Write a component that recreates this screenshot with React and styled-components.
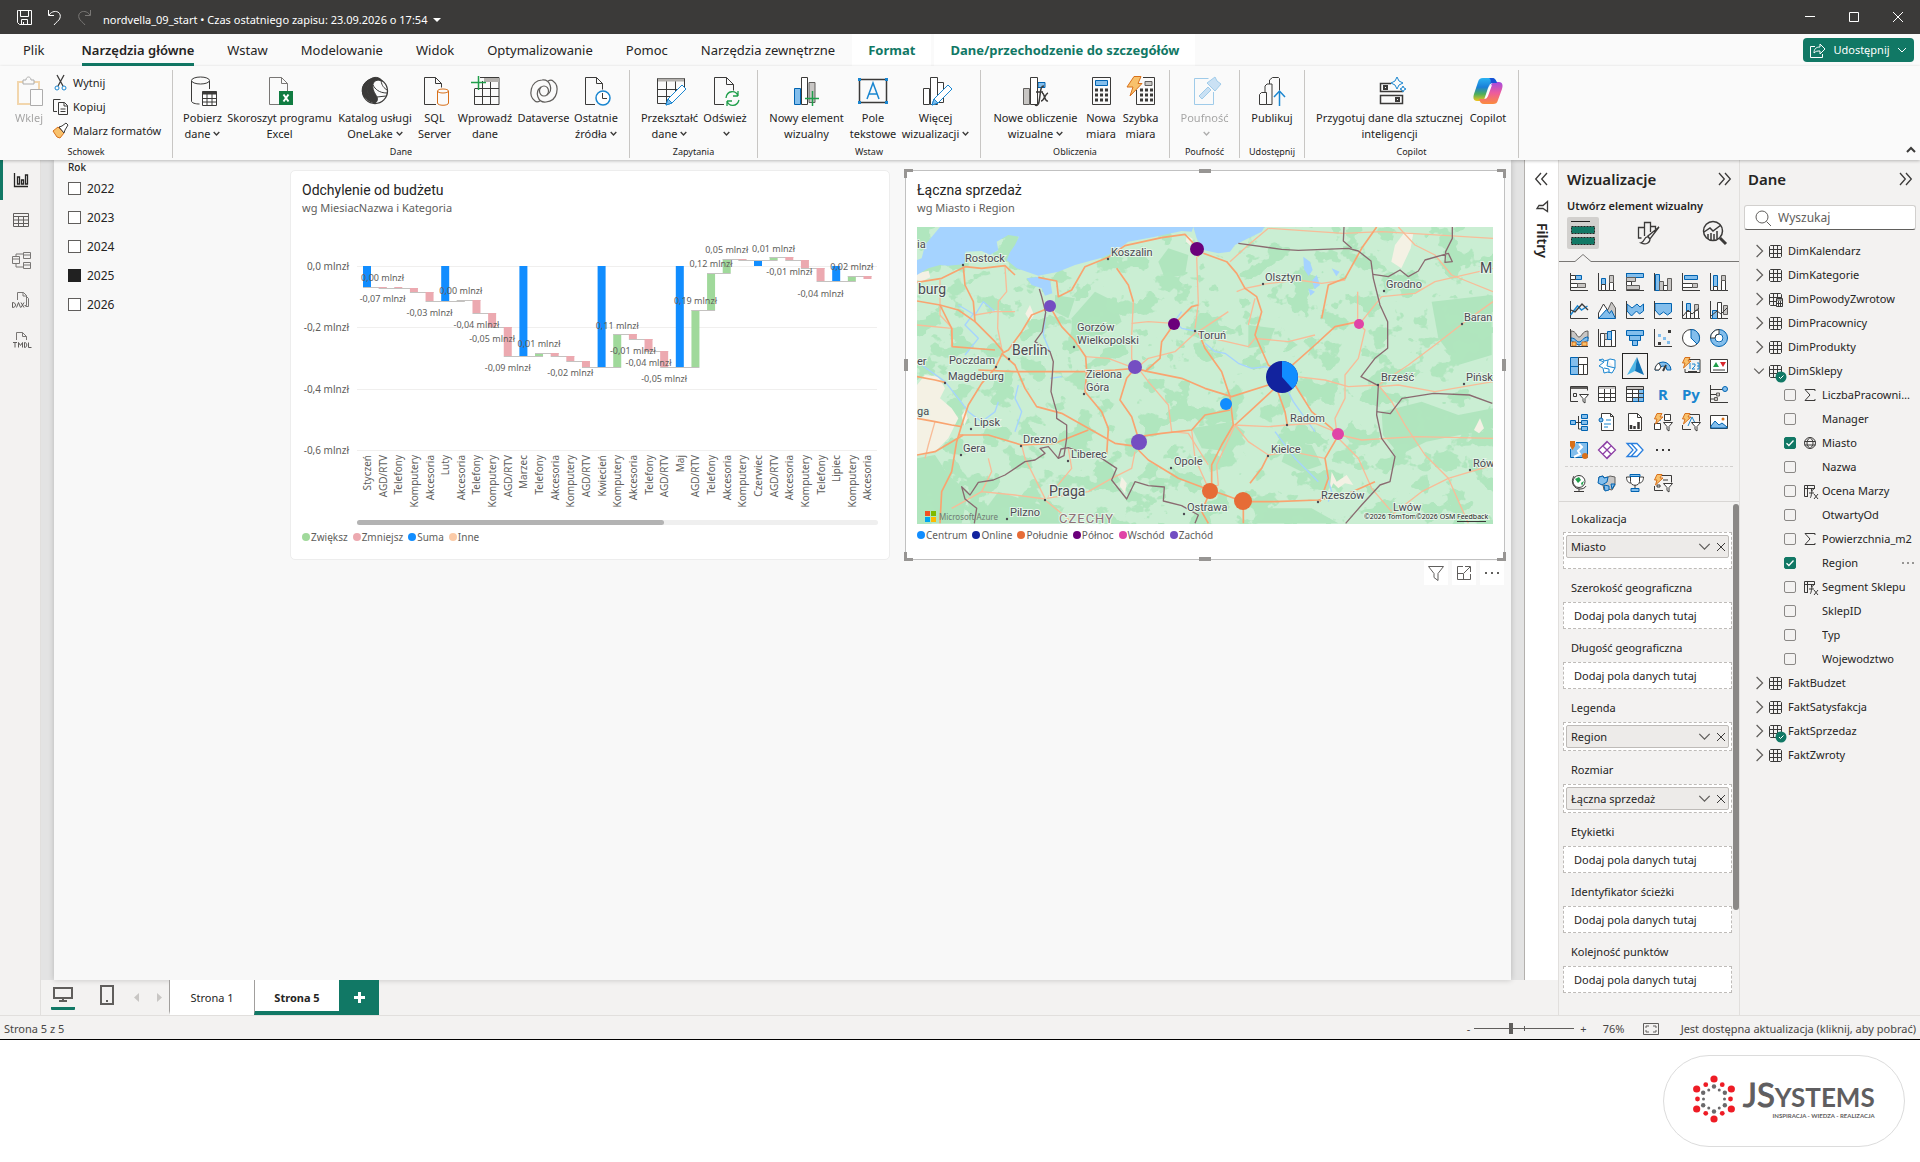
import React, { useState } from 'react'
import styled, { createGlobalStyle } from 'styled-components'

const GlobalStyle = createGlobalStyle`
  * { box-sizing: border-box; }
  body {
    margin: 0;
    background: #fff;
    color: #252423;
    font: 11px/16px "Noto Sans", "Open Sans", sans-serif;
  }
  button, input { font: inherit; color: inherit; }
  button { border: 0; padding: 0; background: none; cursor: pointer; }
  h2, h3, p, ul { margin: 0; padding: 0; }
  ul { list-style: none; }
`

/* ---------- shell ---------- */

const Screen = styled.div`
  min-height: 100vh;
  display: flex;
  flex-direction: column;
`
const AppWindow = styled.div`
  flex: 1;
  display: flex;
  flex-direction: column;
  background: #f3f2f1;
  border-bottom: 1px solid #000;
`
const Workspace = styled.div`
  flex: 1;
  display: flex;
`
const Center = styled.div`
  flex: 1;
  min-width: 0;
  display: flex;
  flex-direction: column;
`
const Svg = styled.svg`
  display: block;
  flex: none;
  overflow: visible;
  fill: none;
  stroke: ${p => p.$color || '#3b3a39'};
  stroke-width: ${p => p.$line || 1};
`

/* ---------- title bar ---------- */

const TitleBar = styled.header`
  height: 34px;
  display: flex;
  align-items: center;
  background: #3b3a39;
  color: #fff;
  padding: 0 0 0 17px;
`
const TitleButton = styled.button`
  width: ${p => p.$w || 30}px;
  height: 34px;
  display: flex;
  align-items: center;
  justify-content: ${p => p.$w ? 'center' : 'flex-start'};
`
const FileName = styled.button`
  display: flex;
  align-items: center;
  gap: 6px;
  margin: 0 auto 0 -4px;
  padding-top: 6px;
  line-height: 16px;
`

/* ---------- ribbon ---------- */

const RibbonTabs = styled.nav`
  height: 32px;
  display: flex;
  align-items: center;
  background: #fafafa;
  padding: 0 6px 0 7px;
`
const RibbonTab = styled.button`
  height: 32px;
  padding: 0 16px;
  margin-right: ${p => p.$first ? 5 : p.$context ? 3 : 1}px;
  font-size: 13px;
  font-weight: ${p => p.$context ? 700 : p.$active ? 600 : 400};
  color: ${p => p.$context ? '#117865' : '#252423'};
  background: ${p => p.$context ? '#fff' : 'none'};
  span {
    display: block;
    padding-top: 2px;
    line-height: 26px;
    border-bottom: 3px solid ${p => p.$active ? '#117865' : 'transparent'};
  }
`
const ShareButton = styled.button`
  margin-left: auto;
  height: 24px;
  width: 111px;
  display: flex;
  align-items: center;
  justify-content: center;
  gap: 7px;
  border-radius: 4px;
  background: #117865;
  color: #fff;
`
const Ribbon = styled.div`
  position: relative;
  z-index: 1;
  height: 94px;
  display: flex;
  align-items: stretch;
  padding: 4px 4px 2px 0;
  background: #fafafa;
  box-shadow: 0 1px 3px rgba(0, 0, 0, 0.25);
`
const RibbonGroup = styled.section`
  display: flex;
  flex-direction: column;
  padding: 0 8px;
  border-right: 1px solid #c8c6c4;
`
const GroupButtons = styled.div`
  height: 78px;
  display: flex;
  justify-content: center;
`
const GroupName = styled.h3`
  font-size: 9px;
  font-weight: 400;
  line-height: 12px;
  text-align: center;
  white-space: nowrap;
`
const RibbonButton = styled.button`
  width: ${p => p.$w}px;
  height: 76px;
  padding-top: 6px;
  display: flex;
  flex-direction: column;
  align-items: center;
  gap: 4px;
  white-space: nowrap;
  opacity: ${p => p.disabled ? 0.4 : 1};
  svg.chev { display: inline-block; margin-left: 3px; vertical-align: 1px; }
`
const ClipButtons = styled.div`
  display: flex;
  flex-direction: column;
  padding: 1px 0 0 2px;
  width: 114px;
`
const ClipButton = styled.button`
  height: 24px;
  display: flex;
  align-items: center;
  gap: 4px;
`
const Collapse = styled.button`
  margin-left: auto;
  align-self: flex-end;
  padding: 0 0 3px;
`

/* ---------- left rail ---------- */

const Rail = styled.nav`
  width: 41px;
  border-right: 1px solid #e1dfdd;
`
const RailButton = styled.button`
  width: 40px;
  height: 40px;
  display: flex;
  align-items: center;
  justify-content: center;
  border-left: 3px solid ${p => p.$active ? '#117865' : 'transparent'};
`

/* ---------- report canvas ---------- */

const CanvasRow = styled.div`
  flex: 1;
  display: flex;
`
const Desk = styled.main`
  flex: 1;
  min-width: 0;
  padding: 0 13px;
  background: #e3e3e3;
  border-right: 1px solid #b3b0ad;
`
const Report = styled.div`
  height: 100%;
  display: grid;
  grid-template-columns: 221px minmax(0, 1fr) minmax(0, 1fr);
  column-gap: 15px;
  align-items: start;
  background: #f8f8f8;
  box-shadow: 0 0 6px rgba(0, 0, 0, 0.2);
  padding-right: 6px;
`
const Slicer = styled.fieldset`
  border: 0;
  margin: 0;
  padding: 0 0 0 14px;
  legend {
    padding: 0;
    font-size: 10px;
    font-weight: 500;
    line-height: 14px;
  }
`
const SlicerItem = styled.label`
  height: 29px;
  display: flex;
  align-items: center;
  gap: 6px;
  font-size: 12px;
  input {
    appearance: none;
    width: 13px;
    height: 13px;
    margin: 0;
    border: 1px solid #605e5c;
    background: #fff;
  }
  input:checked { background: #212121; border-color: #212121; }
`
const Card = styled.section`
  position: relative;
  height: 390px;
  margin-top: 10px;
  padding: 10px 11px;
  background: #fff;
  border: 1px solid ${p => p.$selected ? '#c1c1c1' : '#ededed'};
  border-radius: ${p => p.$selected ? 0 : 5}px;
`
const CardTitle = styled.h2`
  font: 400 14px/18px Roboto, sans-serif;
`
const CardSubtitle = styled.p`
  line-height: 18px;
  color: #605e5c;
`
const ChartScroll = styled.div`
  height: 5px;
  margin: 3px 0 4px 55px;
  border-radius: 3px;
  background: #efefef;
  div {
    width: 59%;
    height: 5px;
    border-radius: 3px;
    background: #b3b3b3;
  }
`
const Legend = styled.ul`
  display: flex;
  gap: 5px;
  font-size: 10px;
  line-height: 16px;
  color: #605e5c;
`
const LegendItem = styled.li`
  display: flex;
  align-items: center;
  gap: 1px;
  &::before {
    content: '';
    width: 8px;
    height: 8px;
    border-radius: 50%;
    background: ${p => p.$color};
  }
`
const MapBox = styled.div`
  margin: 10px 0 3px;
  overflow: hidden;
  svg { display: block; width: 100%; height: auto; }
`
const Handle = styled.i`
  position: absolute;
  ${p => p.$y === 'mid' ? 'top: calc(50% - 6px);' : `${p.$y}: -2px;`}
  ${p => p.$x === 'mid' ? 'left: calc(50% - 6px);' : `${p.$x}: -2px;`}
  width: ${p => p.$y === 'mid' ? 4 : p.$x === 'mid' ? 12 : 9}px;
  height: ${p => p.$x === 'mid' ? 4 : p.$y === 'mid' ? 12 : 9}px;
  ${p => p.$x === 'mid' || p.$y === 'mid'
    ? 'background: #979593;'
    : `border-${p.$x}: 3px solid #979593; border-${p.$y}: 3px solid #979593;`}
`
const VisualTools = styled.div`
  position: absolute;
  top: 100%;
  right: 0;
  margin-top: 2px;
  display: flex;
  gap: 4px;
  button {
    width: 24px;
    height: 24px;
    display: flex;
    align-items: center;
    justify-content: center;
    background: #fff;
  }
`

/* ---------- page tabs and status ---------- */

const PageTabs = styled.nav`
  height: 35px;
  display: flex;
`
const LayoutButton = styled.button`
  width: 44px;
  display: flex;
  justify-content: center;
  padding-top: 5px;
  span {
    display: block;
    height: 25px;
    width: 24px;
    border-bottom: 3px solid ${p => p.$active ? '#117865' : 'transparent'};
    border-radius: 1px;
  }
`
const Arrows = styled.div`
  width: 40px;
  display: flex;
  align-items: center;
  justify-content: space-between;
  padding: 0 7px 0 0;
`
const PageTab = styled.button`
  width: 85px;
  border-left: 1px solid #a19f9d;
  border-bottom: 4px solid ${p => p.$active ? '#117865' : '#fff'};
  background: #fff;
  font-weight: ${p => p.$active ? 700 : 400};
  padding-top: 5px;
`
const AddPage = styled.button`
  width: 40px;
  background: #117865;
  display: flex;
  align-items: center;
  justify-content: center;
`
const StatusBar = styled.footer`
  height: 24px;
  display: flex;
  align-items: center;
  border-top: 1px solid #e1dfdd;
  padding: 2px 4px 0 4px;
  color: #484644;
`
const ZoomArea = styled.div`
  margin-left: auto;
  display: flex;
  align-items: center;
  input {
    appearance: none;
    width: 100px;
    height: 12px;
    margin: 0 6px 0 4px;
    background:
      linear-gradient(#605e5c, #605e5c) 0 50% / 100% 1px no-repeat,
      linear-gradient(#605e5c, #605e5c) 50% 50% / 1px 5px no-repeat;
  }
  input::-webkit-slider-thumb {
    appearance: none;
    width: 4px;
    height: 11px;
    background: #605e5c;
  }
  output { width: 23px; margin: 0 17px 0 16px; }
`
const UpdateLink = styled.a`
  margin-left: 22px;
  color: #484644;
  text-decoration: none;
`

/* ---------- side panes ---------- */

const FilterPane = styled.aside`
  width: 33px;
  background: #fff;
  display: flex;
  flex-direction: column;
  align-items: center;
  padding-top: 13px;
  gap: 16px;
`
const FilterTitle = styled.h2`
  writing-mode: vertical-rl;
  font-size: 14px;
  line-height: 18px;
  font-weight: 600;
  margin-top: -6px;
`
const Pane = styled.aside`
  width: 181px;
  border-left: 1px solid #e1dfdd;
  display: flex;
  flex-direction: column;
`
const PaneHead = styled.header`
  height: 37px;
  display: flex;
  align-items: center;
  justify-content: space-between;
  padding: 0 8px;
  h2 {
    font-size: 15px;
    line-height: 20px;
    font-weight: 600;
  }
`
const BuildTitle = styled.h3`
  padding: 0 8px;
  font-size: 11px;
  line-height: 18px;
  font-weight: 600;
`
const BuildTabs = styled.div`
  display: flex;
  justify-content: space-between;
  padding: 2px 8px 0;
  height: 39px;
  button {
    width: 32px;
    height: 32px;
    display: flex;
    align-items: center;
    justify-content: center;
    border-radius: 2px;
  }
  button:first-child { background: #d2d0ce; }
`
const VisualGrid = styled.div`
  display: grid;
  grid-template-columns: repeat(6, 28px);
  grid-auto-rows: 28px;
  padding: ${p => p.$pinned ? '2px 6px 4px' : '6px 6px 2px'};
`
const VisualButton = styled.button`
  width: 24px;
  height: 24px;
  margin: 2px;
  display: flex;
  align-items: center;
  justify-content: center;
  outline: ${p => p.$on ? '1px solid #252423' : 'none'};
  color: #1a86d0;
  font-size: 15px;
  font-weight: 700;
`
const Dashes = styled.div`
  margin: 0 6px;
  border-top: 1px dashed #d2d0ce;
`
const Wells = styled.div`
  flex: 1;
  display: flex;
  justify-content: space-between;
  border-top: 1px solid #d8d6d4;
`
const WellList = styled.div`
  flex: 1;
  padding-left: 4px;
`
const WellName = styled.h3`
  height: ${p => p.$first ? 30 : 33}px;
  padding: ${p => p.$first ? 9 : 11}px 8px 0;
  font-size: 11px;
  line-height: 16px;
  font-weight: 400;
`
const WellBox = styled.div`
  height: ${p => p.$tall ? 37 : p.$filled ? 29 : 27}px;
  padding: ${p => p.$filled ? '2px' : '0 10px'};
  border: 1px dashed #bebbb8;
  background: #fff;
  line-height: 26px;
`
const Chip = styled.div`
  height: 23px;
  display: flex;
  align-items: center;
  gap: 6px;
  padding: 0 3px 0 4px;
  border: 1px solid #bebbb8;
  border-radius: 2px;
  background: #edebe9;
  span { margin-right: auto; }
`
const Thumb = styled.div`
  width: 6px;
  height: 406px;
  margin: 2px 0 0 1px;
  border-radius: 3px;
  background: #8a8886;
`
const Search = styled.label`
  height: 25px;
  margin: 8px 4px 9px 4px;
  padding: 0 10px;
  display: flex;
  align-items: center;
  gap: 7px;
  border: 1px solid #d2d0ce;
  border-bottom-color: #605e5c;
  border-radius: 3px;
  background: #fff;
  input {
    width: 100%;
    min-width: 0;
    padding: 0;
    border: 0;
    outline: 0;
    font-size: 12px;
    background: none;
  }
  input::placeholder { color: #605e5c; opacity: 1; }
`
const TableRow = styled.button`
  width: 100%;
  height: 24px;
  display: flex;
  align-items: center;
  padding-left: 13px;
  > svg.chev { margin-right: 4px; }
  span { margin-left: 6px; }
`
const FieldRow = styled.label`
  height: 24px;
  display: flex;
  align-items: center;
  padding: 0 6px 0 44px;
  input {
    appearance: none;
    flex: none;
    width: 12px;
    height: 12px;
    margin: 0 8px 0 0;
    border: 1px solid #8a8886;
    border-radius: 2px;
    background: #f3f2f1;
  }
  input:checked {
    border-color: #117865;
    background: #117865 url("data:image/svg+xml,%3Csvg xmlns='http://www.w3.org/2000/svg' viewBox='0 0 10 10'%3E%3Cpath d='M1.5 5.2l2.4 2.3 4.6-5' fill='none' stroke='%23fff' stroke-width='1.3'/%3E%3C/svg%3E") center no-repeat;
  }
  .kind { flex: none; width: 18px; }
  .name {
    flex: 1;
    overflow: hidden;
    white-space: nowrap;
    text-overflow: ellipsis;
  }
`

/* ---------- badge under the window ---------- */

const BadgeStrip = styled.footer`
  display: flex;
  justify-content: flex-end;
  padding: 15px;
  background: #fff;
`
const Badge = styled.a`
  width: 242px;
  height: 92px;
  display: flex;
  align-items: center;
  gap: 7px;
  padding: 0 0 4px 28px;
  border: 1px solid #dcdcdc;
  border-radius: 46px;
  color: #5f5e60;
  font-family: Lato, sans-serif;
  text-decoration: none;
`
const Wordmark = styled.div`
  display: flex;
  flex-direction: column;
  align-items: flex-end;
  strong { font-size: 26px; line-height: 30px; font-weight: 700; }
  big { font-size: 33px; font-weight: 400; -webkit-text-stroke: 1px #5f5e60; }
  small { font-size: 6px; line-height: 8px; font-weight: 700; }
`

/* ---------- icons ---------- */

const bl = { fill: '#83beec', stroke: '#0063b1' }
const gr = { fill: '#c8c6c4', stroke: '#605e5c' }
const wh = { fill: '#fff' }
const or = { fill: '#f8c16c', stroke: '#d8701a' }
const teal = { stroke: '#1a86d0' }
const Axis = () => <path d="M.5 0v17.5H18" />
const Bolt = () => <path d="M3 .5h5L6 4h3L1.500 11 3 6H.5z" {...or} />
const Funnel = () => <path d="M9.500 9.500h9l-3.500 4v4.500l-2-1.500v-3z" {...wh} />

const Chevron = ({ size = 10, dir = 'down', color, line }) => {
  const d = { down: 'M1 3l4 4 4-4', up: 'M1 7l4-4 4 4', right: 'M3 0l5 5-5 5' }[dir]
  return <Svg className="chev" width={size} height={size} viewBox="0 0 10 10" $color={color} $line={line}><path d={d} /></Svg>
}
const Double = ({ left }) => (
  <Svg width="13" height="12" viewBox="0 0 13 12" $line={1.3}>
    <path d={left ? 'M6 0L.7 6 6 12M12 0L6.700 6 12 12' : 'M1 0l5.300 6L1 12M7 0l5.300 6L7 12'} />
  </Svg>
)

const bigIcons = {
  paste: <><path d="M9 6H4v22h12M20 6h5v7" stroke="#e8a33d" strokeWidth="2" /><path d="M9 8V4h3c0-4 5-4 5 0h3v4z" /><path d="M16.500 13.500h12v16h-12z" {...wh} /></>,
  database: <><path d="M3.500 5v20c0 2 4 3 8 3M21.500 5v8" /><ellipse cx="12.500" cy="4.500" rx="9" ry="3.500" /><path d="M14.500 15.500h14v14h-14z" {...wh} /><path d="M14.500 17h14" strokeWidth="3" /><path d="M14.500 22.500h14M14.500 26h14M19 18v11M24 18v11" /></>,
  excel: <><path d="M14 28.500H4.500v-27h12l6 6v8M16.500 1.500v6h6" stroke="#797775" /><path d="M14 15h14v14H14z" fill="#107c41" stroke="none" /><path d="M18.500 18.500l5 7M23.500 18.500l-5 7" stroke="#fff" strokeWidth="2" /></>,
  lake: <><circle cx="15" cy="15" r="12.500" strokeWidth="1.300" /><path d="M10 3.500C14 0 20 1 22 5c-5-2-8 0-9 3-1 6 2 9 4 13 1 3 0 5-2 6-2-1-4-3-5-5C7 17 7 10 10 3.500z" fill="#3b3a39" /><path d="M10 3.500C3 6 0 14 4 20c3 4 6 6 11 7-7-5-10-13-5-23.500z" fill="#3b3a39" /><path d="M13 9c2 4 6 8 14 8M17 21l9-1M21 5c1 5 3 7 6 9" /></>,
  sql: <><path d="M16 28.500H4.500v-27h11l6 6v4M15.500 1.500v6h6" /><path d="M17.500 15v12c0 3 11 3 11 0V15" fill="#fafafa" stroke="#d8701a" /><ellipse cx="23" cy="15" rx="5.500" ry="2" stroke="#d8701a" /></>,
  enter: <><path d="M10 1.500h19v27H4.500V13M4.500 20.500h24.500M4.500 12.500h24.500M12.500 5v23.500M20.500 5v23.500" /><path d="M14 4h15" stroke="#b3b0ad" strokeWidth="4" /><path d="M8.500 0v14M1 6.500h15" stroke="#1f9e4a" strokeWidth="1.500" /></>,
  dataverse: <g stroke="#605e5c" strokeWidth="1.200"><ellipse cx="15" cy="15" rx="4.500" ry="5" /><path d="M24 5c7 5 5 20-7 21-8 1-12-10-5-15M6 25C-1 20 1 5 13 4c8-1 12 10 5 15M19 5c2-1 4-1 5 0M11 25c-2 1-4 1-5 0" /></g>,
  recent: <><path d="M14 28.500H4.500v-27h11l6 6v6M15.500 1.500v6h6" /><circle cx="22" cy="22" r="7" fill="#fff" stroke="#1a86d0" strokeWidth="1.500" /><path d="M21.500 17v5.500H26" /></>,
  transform: <><path d="M2.500 2.500h27v9M2.500 2.500v25H14M2.500 13.500h25M2.500 20.500h16M11.500 5v22M20.500 5v14" /><path d="M3 4h26" stroke="#b3b0ad" strokeWidth="3" /><path d="M11 29l2-6 14-14 4 4-14 14z" fill="#fff" stroke="#1a86d0" /><path d="M11 29l2-6 4 4z" fill="#83beec" stroke="#1a86d0" /></>,
  refresh: <><path d="M14 28.500H4.500v-27h12l7 7v6M16.500 1.500v7h7" /><path d="M16 22c1-8 10-8 12-2v-5M29 24c-2 7-10 7-12 1v5M28 20h-5M17 25h5" stroke="#1f9e4a" strokeWidth="1.300" /></>,
  newVisual: <><path d="M2.500 12.500h6v16h-6z" {...bl} /><path d="M17 6.500h6v20h-6z" {...gr} /><path d="M9.500 1.500h6v27h-6z" {...wh} /><path d="M20.500 15v15M13 22.500h14" stroke="#1f9e4a" strokeWidth="1.500" /></>,
  textBox: <><path d="M1.500 3.500h27v23h-27z" strokeWidth="1.500" /><path d="M9 23l6-16 6 16M11 18h8" stroke="#1a86d0" strokeWidth="1.500" /><path d="M0 2h3v3H0zM27 2h3v3h-3zM0 25h3v3H0zM27 25h3v3h-3z" fill="#1a86d0" stroke="none" /></>,
  moreVisuals: <><path d="M2.500 12.500h6v16h-6zM9.500 1.500h7v27h-7zM16.500 6.500h6v20h-6z" {...wh} /><path d="M11 29l2-6 14-14 4 4-14 14z" fill="#fff" stroke="#1a86d0" /><path d="M11 29l2-6 4 4z" fill="#83beec" stroke="#1a86d0" /></>,
  visualCalc: <><path d="M2.500 12.500h6v16h-6z" {...gr} /><path d="M17 6.500h7v5h-7z" {...bl} /><path d="M9.500 1.500h7v27h-7z" {...wh} /><path d="M23 10c-4 0-3 5-5 16-.5 3-2 4-4 3M15 16h7M21 17c3 0 2 9 6 8M27 17c-3 1-4 8-7 8" strokeWidth="1.500" /></>,
  measure: <><path d="M6.500 1.500h18v27h-18z" /><path d="M9.500 4.500h12v5h-12z" {...bl} /><path d="M9 14h13M9 19h13M9 24h13" strokeWidth="3" strokeDasharray="3 2" /></>,
  quickMeasure: <><path d="M17 1.500h11.500v27h-18V14" /><path d="M19 5.500h7v4h-7z" {...gr} /><path d="M14 14h13M14 19h13M14 24h13" strokeWidth="3" strokeDasharray="3 2" /><path d="M8 .5h7l-3 7h4L4 20l3-9H1z" {...or} /></>,
  sensitivity: <><path d="M4.500 2.500h14M4.500 2.500v26h19V16" {...teal} /><path d="M9 20l9-9 3 3-9 9zM17 7l8-6 2 4 4 3-6 7z" fill="#83beec" stroke="#1a86d0" /></>,
  publish: <><path d="M2.500 28.500v-10l2-2h5v12zM8 16v-6l2-2h5v20.500H9.500M12.500 8V4l3-2.500h6l1 1v12" /><path d="M22.500 30V16M17 21l5.500-6 5.500 6" stroke="#1a86d0" strokeWidth="1.500" /></>,
  prepare: <><path d="M16 7.500H5.500v8h22V13M5.500 19.500h22v8h-22z" strokeWidth="1.500" /><path d="M9 10h3v3H9zM21 22h3v3h-3z" strokeWidth="2" /><path d="M22 1l2 4 4 2-4 2-2 4-2-4-4-2 4-2zM28 10l1 2 2 1-2 1-1 2-1-2-2-1 2-1z" fill="#fafafa" stroke="#1a86d0" /></>,
  copilot: <g stroke="none"><path d="M10 2h9c3 0 4 2 5 5h-4c-3 0-4 2-5 5l-3 9c-1 3-2 4-5 4H4c-4 0-4-4-3-7l4-12c1-3 2-4 5-4z" fill="url(#copA)" /><path d="M20 28h-9c-3 0-4-2-5-5h4c3 0 4-2 5-5l3-9c1-2 2-3 5-3h3c4 0 4 4 3 7l-4 11c-1 3-2 4-5 4z" fill="url(#copB)" /><path d="M15 12c1-3 2-5 5-5h4c-1-3-2-5-5-5h-3c3 2 2 5-1 10z" fill="#1750d6" /><path d="M13 21l3-9c1-2 2-3 3-3l-4 11c-1 2-2 3-3 3z" fill="#fff" /></g>,
}
const BigIcon = ({ name }) => (
  <Svg width="30" height="30" viewBox="0 0 30 30">
    {name === 'copilot' && (
      <defs>
        <linearGradient id="copA" x1="0" y1="0" x2="0" y2="1"><stop offset="0" stopColor="#2ab3f2" /><stop offset=".4" stopColor="#1a7fd8" /><stop offset=".7" stopColor="#4fae5a" /><stop offset="1" stopColor="#f0c51d" /></linearGradient>
        <linearGradient id="copB" x1="0" y1="0" x2="0" y2="1"><stop offset="0" stopColor="#a34be0" /><stop offset=".5" stopColor="#ee5b9c" /><stop offset="1" stopColor="#fb8b3c" /></linearGradient>
      </defs>
    )}
    {bigIcons[name]}
  </Svg>
)

const smallTable = <><path d="M.5 3V1.500l1-1h10l1 1v10l-1 1h-10l-1-1zM.5 4.500h12M.5 8.500h12M4.500.5v12M8.500.5v12" /></>

// gallery tiles, in reading order
const gallery = [
  ['Skumulowany słupkowy', <><Axis /><path d="M5.500 2.500h6v4h-6z" {...bl} /><path d="M.5 2.500h5v4h-5zM.5 10.500h7v4h-7z" {...wh} /><path d="M7.500 10.500h8v4h-8z" {...gr} /></>],
  ['Skumulowany kolumnowy', <><Axis /><path d="M3.500 5.500h4v6h-4z" {...bl} /><path d="M3.500 11.500h4v6h-4zM11.500 9.500h4v8h-4z" {...wh} /><path d="M11.500 2.500h4v7h-4z" {...gr} /></>],
  ['Grupowany słupkowy', <><Axis /><path d="M.5 .5h17v4H.5z" {...bl} /><path d="M.5 4.500h9v4h-9z" {...gr} /><path d="M.5 8.500h5v4h-5z" {...wh} /><path d="M.5 12.500h13v4H.5z" {...gr} /></>],
  ['Grupowany kolumnowy', <><Axis /><path d="M1.500 1.500h4v16h-4z" {...bl} /><path d="M5.500 8.500h4v9h-4z" {...gr} /><path d="M9.500 12.500h4v5h-4z" {...wh} /><path d="M13.500 5.500h4v12h-4z" {...gr} /></>],
  ['Skumulowany słupkowy 100%', <><Axis /><path d="M2.500 2.500h13v4h-13z" {...bl} /><path d="M.5 10.500h10v4H.5z" {...wh} /><path d="M10.500 10.500h5v4h-5z" {...gr} /></>],
  ['Skumulowany kolumnowy 100%', <><Axis /><path d="M3.500 2.500h4v11h-4z" {...bl} /><path d="M3.500 13.500h4v4h-4zM11.500 7.500h4v10h-4z" {...wh} /><path d="M11.500 2.500h4v5h-4z" {...gr} /></>],

  ['Liniowy', <><Axis /><path d="M.5 14l7-9 4 4 6-4" {...teal} strokeWidth="1.500" /><path d="M1 9l4 2 7-8 6 6" strokeWidth="1.300" /></>],
  ['Warstwowy', <><path d="M6 17L13.500 1l4 6v10z" {...gr} /><path d="M.5 12l5-9 4 6-5 8h-4z" {...wh} /><path d="M.5 17.500l8-9 3 4 2-3 4 8z" {...bl} /></>],
  ['Skumulowany warstwowy', <><path d="M1 3l5 4 5-4 3 3 3.500-3v7l-4 3-3-3-5 5L1 10z" {...bl} /><Axis /></>],
  ['Warstwowy 100%', <><path d="M1 2.500h16.500V11l-4 3-4-3-4 3L1 9z" {...bl} /><Axis /></>],
  ['Liniowy i skumulowany', <><Axis /><path d="M4.500 2.500h4v8h-4z" {...bl} /><path d="M4.500 10.500h4v7h-4zM12.500 9.500h4v8h-4z" {...wh} /><path d="M12.500 3.500h4v6h-4z" {...gr} /><path d="M1 15l5-6 4 4 7-6" /></>],
  ['Liniowy i grupowany', <><Axis /><path d="M2.500 9.500h5v8h-5z" {...bl} /><path d="M7.500 1.500h4v16h-4z" {...wh} /><path d="M13.500 4.500h4v9h-4z" {...gr} /><path d="M1 15l6-5 4 3 6-6" /></>],

  ['Wstążkowy', <><path d="M1 2c6 0 5 6 8 6s3-6 9-6v8c-5 0-6 6-9 6s-4-6-8-6z" {...gr} /><path d="M1 9c5 0 5 4 8 4s4-5 9-5v4c-5 0-6 4-9 4s-4-4-8-4z" {...bl} /><path d="M2 13h4v4H2zM12 13h5v4h-5z" {...or} /><Axis /></>],
  ['Kaskadowy', <><Axis /><path d="M2.500 4.500h4v13h-4zM13.500 1.500h4v16h-4z" {...wh} /><path d="M6.500 4.500h3v6h-3z" {...gr} /><path d="M9.500 2.500h4v8h-4z" {...bl} /></>],
  ['Lejek', <><path d="M.5 1.500h17v5H.5zM3.500 6.500h11v5h-11zM6.500 11.500h5v5h-5z" {...bl} /></>],
  ['Punktowy', <><Axis /><path d="M14 1h3v3h-3zM4 13h3v3H4z" fill="#3b3a39" stroke="none" /><path d="M4 5h3v3H4zM9 8h3v3H9zM13 12h3v3h-3z" fill="#83beec" stroke="none" /></>],
  ['Kołowy', <><circle cx="9" cy="9" r="8.500" {...wh} /><path d="M9 .5v8.500l6 6A8.500 8.500 0 0 0 9 .5z" {...bl} /></>],
  ['Pierścieniowy', <><circle cx="9" cy="9" r="6.500" stroke="#83beec" strokeWidth="4" /><circle cx="9" cy="9" r="8.500" stroke="#0063b1" /><circle cx="9" cy="9" r="4" {...wh} stroke="#0063b1" /><path d="M.5 9A8.500 8.500 0 0 1 9 .5V5a4 4 0 0 0-4 4z" {...wh} /></>],

  ['Mapa drzewa', <><path d="M.5 .5h8v17h-8z" {...bl} /><path d="M8.500 .5h9v7h-9zM8.500 7.500h5v10h-5zM13.500 7.500h4v10h-4z" {...wh} /><path d="M.5 9.500h8" stroke="#0063b1" /></>],
  ['Mapa', <path d="M1 3l4-1 1 2 4-1 2-1 5 1v8l-3 5-4-1-4 1-1-5-4-2 5-4zM10 3l-1 6 8 2M6 11l5 1v4" stroke="#1a86d0" fill="#fff" />],
  ['Azure Maps', <><path d="M11 0L1 18l8-4z" fill="#4fb8e8" stroke="none" /><path d="M11 0L9 14l9 4z" fill="#1272b4" stroke="none" /></>, true],
  ['Miernik', <><path d="M1 13a8 8 0 0 1 16 0h-4a4 4 0 0 0-8 0z" {...bl} /><path d="M1 13a8 8 0 0 1 4-7l2 4-2 3z" {...wh} /><path d="M9 14l3-6" strokeWidth="2" /></>],
  ['Karta', <><path d="M7 2.500h11v13H3V12M6 14.500h9" /><path d="M8 6v6M10 7h3v2l-3 3h3M15 6h2v6h-2M15 9h2" {...teal} /><Bolt /></>],
  ['Wskaźnik KPI', <><path d="M.5 2.500h17v13H.5zM3 13h12" {...wh} /><path d="M3 10l3-5 3 5z" fill="#1f9e4a" stroke="none" /><path d="M10 5h6l-3 5z" fill="#d8262c" stroke="none" /></>],

  ['Fragmentator', <><path d="M.5 1.500h17v4M.5 1.500v15H8" /><path d="M1 3h16" {...gr} strokeWidth="2" /><path d="M3.500 8.500h3v3h-3z" /><Funnel /></>],
  ['Tabela', <><path d="M.5 1.500h17v15H.5zM.5 8.500h17M.5 12.500h17M6.500 4v13M12.500 4v13" {...wh} /><path d="M1 3h16" stroke="#c8c6c4" strokeWidth="2" /></>],
  ['Macierz', <><path d="M.5 1.500h17v15H.5z" {...wh} /><path d="M6.500 12.500h11v4h-11zM12.500 8.500h5v4h-5z" {...bl} /><path d="M12.500 4.500h5v4h-5z" {...bl} /><path d="M.5 4.500h17M.5 8.500h17M.5 12.500h17M6.500 4v13M12.500 4v13" /><path d="M1 3h16" stroke="#c8c6c4" strokeWidth="2" /></>],
  ['R', 'R'],
  ['Python', 'Py'],
  ['Kluczowe elementy', <><path d="M.5 0v17.500H18M.5 4.500h12M.5 9.500h6M.5 14h4" /><circle cx="15" cy="4" r="2.500" {...bl} /><path d="M6.500 8h3v3h-3zM4.500 12.500h3v3h-3z" {...gr} /></>],

  ['Drzewo dekompozycji', <><path d="M6 9.500h5M8.500 3v13H11" /><path d="M.5 7.500h5v4h-5zM11.500 1.500h6v4h-6zM11.500 7.500h6v4h-6zM11.500 13.500h6v4h-6z" {...bl} /></>],
  ['Narracja', <><path d="M3.500 5V.5h9l3 3v14h-12V10M12.500 .5v3h3" {...wh} /><circle cx="3" cy="7" r="2" {...bl} /><path d="M8 7h5M6 11h7M6 14h4" {...teal} /></>],
  ['Raport podzielony', <><path d="M2.500 .5h9l4 4v13h-13z" {...wh} /><path d="M11.500 .5v4h4" /><path d="M5 16v-4M8.500 16v-3M12.500 16V9" strokeWidth="2.500" /></>],
  ['Fragmentator kafelkowy', <><path d="M10.500 1.500h6v6h-6z" {...wh} /><path d="M.5 10.500h6v6h-6z" {...wh} /><path d="M3 5h3v3" {...bl} /><Bolt /><Funnel /></>],
  ['Fragmentator tekstu', <><path d="M8 1.500h9.500v7M.5 12v4.500H9" /><path d="M6 13l4-9 3 6" {...teal} /><Bolt /><Funnel /></>],
  ['Obraz', <><path d="M.5 2.500h17v13H.5z" {...wh} /><path d="M1 13l4-5 4 4 3-2 5 4v1H1z" {...bl} /><circle cx="13" cy="6" r="1.500" fill="#d8701a" stroke="none" /></>],

  ['ArcGIS', <><path d="M6 1.500h11.500v15H.5V8" fill="#83beec" stroke="#0063b1" /><path d="M9 3l3 3-4 4 2 3-6 3" stroke="#fff" strokeWidth="2" /><path d="M0 0h5v5L2.500 9 0 5z" fill="#d8701a" stroke="none" /><circle cx="15" cy="15" r="3" fill="#d8701a" stroke="none" /></>],
  ['Power Apps', <path d="M9 .5L17.500 9 9 17.500.5 9zM9 9L5 5M9 9l4-4M9 9l-4 4M9 9l4 4M5 5l4-4M13 13l-4 4" stroke="#8d3fa5" fill="#fff" strokeWidth="1.300" />],
  ['Power Automate', <path d="M1 2.500h10l6 6.500-6 6.500H1L7 9zM5 2.500L11 9l-6 6.500" stroke="#2a7fde" fill="#fff" strokeWidth="1.300" />],
  ['Więcej', <path d="M2 9h2M8 9h2M14 9h2" strokeWidth="2" />],
]
const pinned = [
  ['Globus', <><circle cx="9" cy="7.500" r="6" {...wh} /><path d="M5 5l4-2 2 3-3 3zM11 9l3-2-2 5z" fill="#1f9e4a" stroke="none" /><path d="M4 2c-4 6 0 13 6 13 3 0 5-1 6-3M9 15v2.500M4 17.500h10" /></>],
  ['Kartogram', <><path d="M1 3l4-1 1 2 4-1 2-1 5 1v8l-3 5-4-1-4 1-1-5-4-2z" {...gr} /><path d="M1 3l4-1 1 2 4-1-1 5-5 3-4-2zM6 11l5 1v4l-4 1zM13 10h4l-3 5z" {...bl} /></>],
  ['Trofeum', <><path d="M4.500 .5h9v7c0 5-9 5-9 0zM4.500 3h-4c0 4 2 6 4 6M13.500 3h4c0 4-2 6-4 6M9 11v3" {...wh} /><path d="M4 .5h10v2H4zM5 14.500h8v3H5z" {...bl} /></>],
  ['Fragmentator listy', <><path d="M8 1.500h9.500v7M.5 12v4.500H9M9 6h5M3 11h3v2H3z" /><Bolt /><Funnel /></>],
]

/* ---------- waterfall ---------- */

// [category, kind, top, bottom] in chart units down from zero
const bars = [
  ['Styczeń', 'sum', 0, 21], ['AGD/RTV', 'dec', 21, 22], ['Telefony', 'dec', 21, 22], ['Komputery', 'dec', 22, 26], ['Akcesoria', 'dec', 26, 35],
  ['Luty', 'sum', 0, 35], ['Akcesoria', 'inc', 34, 35], ['Telefony', 'dec', 34, 47], ['Komputery', 'dec', 47, 61], ['AGD/RTV', 'dec', 61, 90],
  ['Marzec', 'sum', 0, 90], ['Telefony', 'inc', 87, 90], ['Akcesoria', 'dec', 87, 90], ['Komputery', 'dec', 90, 95], ['AGD/RTV', 'dec', 95, 101],
  ['Kwiecień', 'sum', 0, 101], ['Komputery', 'inc', 68, 101], ['Akcesoria', 'dec', 68, 73], ['Telefony', 'dec', 73, 85], ['AGD/RTV', 'dec', 85, 101],
  ['Maj', 'sum', 0, 101], ['AGD/RTV', 'inc', 44, 101], ['Telefony', 'inc', 7, 44], ['Akcesoria', 'inc', -7, 7], ['Komputery', 'dec', -7, -6],
  ['Czerwiec', 'sum', -6, 0], ['AGD/RTV', 'inc', -9, -6], ['Akcesoria', 'dec', -9, -6], ['Komputery', 'dec', -6, 2], ['Telefony', 'dec', 2, 15],
  ['Lipiec', 'sum', 0, 15], ['Komputery', 'inc', 10, 15], ['Akcesoria', 'dec', 10, 13],
]
// [bar index, value, center offset]
const barLabels = [
  [1, '0,00', 12], [1, '-0,07', 33], [4, '-0,03', 47], [6, '0,00', 25], [7, '-0,04', 59], [8, '-0,05', 73], [9, '-0,09', 102],
  [11, '0,01', 78], [13, '-0,02', 107], [16, '0,11', 60], [17, '-0,01', 85], [18, '-0,04', 97], [19, '-0,05', 113], [21, '0,19', 35],
  [22, '0,12', -2], [23, '0,05', -16], [26, '0,01', -17], [27, '-0,01', 6], [29, '-0,04', 28], [31, '0,02', 1],
]
const barColor = { sum: '#118dff', inc: '#a0d99b', dec: '#eca9b0' }
const slot = i => 65 + i * 15.64

const ChartSvg = styled.svg`
  display: block;
  width: 100%;
  margin-top: 23px;
  fill: #605e5c;
  font-size: 10px;
  .label { font-size: 9px; text-anchor: middle; }
`
const Waterfall = () => (
  <ChartSvg viewBox="0 0 576 277" role="img" aria-label="Odchylenie od budżetu">
    {['0,0', '-0,2', '-0,4', '-0,6'].map((v, i) => (
      <g key={v}>
        <path d={`M55 ${26.500 + Math.round(i * 61.4)}h520`} stroke="#f0efee" />
        <text x="47" y={30 + Math.round(i * 61.4)} textAnchor="end">{v} mlnzł</text>
      </g>
    ))}
    {bars.map(([name, kind, top, bottom], i) => {
      const end = kind === 'inc' ? top : kind === 'sum' && bottom === 0 ? top : bottom
      return (
        <g key={i}>
          <rect x={slot(i) - 4} y={26 + top} width="8" height={bottom - top} fill={barColor[kind]} />
          {i < bars.length - 1 && <path d={`M${slot(i) - 4} ${26.500 + end}H${slot(i + 1) + 4}`} stroke="#c4c2c0" />}
          <text transform={`translate(${slot(i) + 4} 215) rotate(-90)`} textAnchor="end">{name}</text>
        </g>
      )
    })}
    {barLabels.map(([i, v, y], k) => (
      <text key={k} className="label" x={slot(i)} y={29 + y}>{v} mlnzł</text>
    ))}
  </ChartSvg>
)

/* ---------- map ---------- */

const water = [
  'M75 6L55 30 30 60 20 100 6 105V150L40 130 75 120 100 122 145 118 160 92 150 80 200 78 225 90 250 75 245 50 280 30 312 35 300 60 285 82 275 105 305 130 370 152 430 140 480 120 560 98 600 80 640 50 720 35 800 18 830 20 835 6z',
  'M835 6L845 40 865 75 910 85 945 80 960 60 1000 40 1040 20 1048 6z',
  'M335 160L372 155 405 165 412 205 390 212 380 190 350 180z',
  'M1165 95l20 15 8 25-12 18-14-20zM1205 150l10 30-16 12-8-24zM1250 130l24 10-10 14zM1180 190l20 10-14 12z',
]
const rivers = [
  'M870 355L900 380 930 385 970 415 1010 430 1050 425 1095 440', 'M850 320L800 310 778 290 800 260', 'M1110 480L1135 530 1160 565 1200 620',
  'M392 262L385 330 405 380M405 460L440 455', 'M130 240L180 270 205 230 240 260M20 420L90 470 130 520 160 560 200 590 240 560 250 530',
  'M310 480L300 520 320 560 300 620M1080 620L1140 700 1210 770', 'M180 260L150 300 190 340 150 390', 'M1235 750L1250 800 1240 830',
]
const beige = [
  'M6 480L30 450 70 455 90 490 75 520 110 550 130 580 100 640 60 680 6 690z', 'M345 240l12 30-12 18-14-22z', 'M1250 740l15 30 30-20 20 30-25-5-20 15-15-15-12 25z',
  'M620 755l15 20-5 30-16-22z', 'M6 145l35-8 5 20-25 12-15-5z', 'M1440 60l30-40 25 5-8 45-28 60-30-20z', 'M1695 580l12 30-15 15-15-10z', 'M815 30l18 12-6 20-14-12z', 'M150 555l8 25-10 22-8-30z',
]
const forest = [
  'M6 700L60 690 100 750 160 800 140 895 6 895z', 'M470 280l70-80 60 30 20 60-60 40-90 10z', 'M830 610l120-20 40 30-40 60-90-10z', 'M760 70l60 20-10 60-60 10-20-50z',
  'M1120 650l70 10 30 60-60 20-60-30z', 'M1000 300l80 10-20 50-60 10z', 'M1400 560l120-30 110 40 104-20v60l-200 40-80 40-50-60z', 'M1550 230l180-20v180l-100 30-60-80z',
  'M250 800l160 50 40 45H180z', 'M1040 850l150 0 80 45h-260z', 'M420 210l60 10-20 60-40-20z',
]
const majorRoads = [
  'M6 172L80 160 150 125 200 130 270 122 300 150', 'M370 157L425 168 430 215 470 195 510 125 580 97 630 62 740 38 810 28 840 60 850 95', 'M145 125L150 180 175 230 180 290 240 350 265 380',
  'M6 228L75 240 130 255 180 290', 'M190 435L300 440 510 440 600 435 660 430 700 440 800 460 870 490 950 515 1060 480 1100 455', 'M405 245L440 305 478 345 512 395 515 440 510 500 560 560 580 610 575 690',
  'M400 250L350 270 320 320 280 375 262 385', 'M262 385L240 430 200 475 160 540 140 600 125 650 110 740 80 800 75 895', 'M260 385L300 420 330 490 365 545 440 565 520 610 600 655 670 665',
  'M130 630L220 630 320 660 420 655 520 615', 'M660 430L635 460 615 525 650 575 670 640', 'M670 675L700 705 790 760 870 790 930 810 985 830 1080 830 1210 825 1290 810 1380 770',
  'M672 635L740 625 830 615 870 570 945 555', 'M850 320L870 370 920 440 945 515 950 560 955 600 920 660 890 720 890 790', 'M865 85L935 110 965 145 990 190 1025 215 1040 260 1020 330 1060 420 1090 440',
  'M960 600L1020 545 1090 480', 'M1110 440L1200 360 1260 305 1330 290', 'M1140 480L1190 560 1250 610 1265 630', 'M1265 640L1230 700 1240 760 1215 830', 'M1385 6L1340 70 1290 160 1240 180 1220 280',
  'M775 300L740 350 735 400 690 440', 'M780 295L830 245 850 240', 'M605 130L640 180 655 230', 'M145 630L60 680 6 690', 'M1085 490L1110 560 1117 600', 'M1060 690L1040 730 1005 775', 'M985 830V895M885 800L860 860 880 895',
  'M6 580L60 590 110 600 140 605', 'M6 455L60 465 90 472', 'M75 240L110 310 112 365 240 375',
]
const minorRoads = [
  'M270 125L275 200 250 230 248 310 262 380', 'M75 165V270L112 310 110 365', 'M845 95L850 235 840 310', 'M655 230L650 330V400L660 430', 'M650 295L700 290 775 295', 'M512 395L580 400 660 430', 'M670 430L700 470 760 540 770 620 820 625 880 720',
  'M845 320L780 380 700 400 670 425', 'M1040 180L990 190 965 200', 'M1043 178L1150 165 1220 175 1290 165', 'M850 320L940 260M870 335L1000 365 1020 340 1120 350 1200 330', 'M1145 455L1230 465 1300 485 1390 480', 'M1335 300L1350 315 1330 400 1290 450 1290 520 1260 580 1265 620',
  'M955 600L1060 605 1117 600 1200 595 1260 620', 'M1275 630L1340 645 1500 635 1734 640', 'M1328 200L1328 290', 'M1335 295L1400 215 1500 205 1560 170 1734 130', 'M1390 480L1480 420 1560 360 1650 290 1734 230', 'M1390 485L1450 480 1560 500 1734 470',
  'M1390 480L1430 530 1470 600 1530 690 1600 760 1734 720', 'M1430 870L1520 800 1600 760 1660 895', 'M1060 10L1285 25 1400 20 1734 40', 'M390 820L360 760 330 700 320 660', 'M390 822L300 810 200 800 110 850', 'M390 825L470 890', 'M395 820L520 800 590 760 650 730 660 680',
  'M460 670L470 730 400 815', 'M960 600L1000 650 1060 690 1130 680 1230 700', 'M1270 640L1330 700 1370 790 1430 860', 'M6 300L110 310', 'M180 270L240 260 300 260', 'M945 110L1000 60 1060 10', 'M1450 6L1500 60 1560 90 1610 150 1734 200', 'M1020 220L1000 300', 'M890 790L910 780 905 720 960 600', 'M830 615L840 700 880 790', 'M220 700L230 740 200 800', 'M60 590L40 660 30 700',
]
const borders = [
  'M373 192L380 215 392 262 382 320 360 350 405 380 415 410 408 500 425 560 425 580 455 600 455 640 447 692 430 700 400 665 375 670 390 685 360 705 330 710 270 750 235 765 190 772 165 810 140 785 150 822 185 850 178 895',
  'M430 700L438 672 460 668 520 690 560 700 605 730 590 765 635 822 660 770 700 782 748 786 745 828 800 842 850 870 840 895', 'M970 55L1100 73 1150 76 1300 70 1330 78 1368 108 1375 160 1395 240 1418 290 1418 370 1380 400 1338 455 1390 482 1385 570 1400 640 1440 695 1425 770 1395 780 1340 840 1292 895',
  'M1310 70L1285 48 1287 6', 'M1374 148L1420 155 1455 135 1480 155 1510 138 1530 105 1600 85 1612 110 1590 112 1592 80 1612 40V6', 'M1385 560L1426 566 1461 520 1556 505 1663 510 1732 535',
]
// [name, x, y, dot x, dot y, large]
const towns = [
  ['Rostock', 48, 35, 46, 38], ['Koszalin', 194, 29, 191, 32], ['Olsztyn', 348, 54, 346, 57], ['Grodno', 469, 61, 467, 64], ['burg', 1, 67, 0, 0, true], ['Berlin', 95, 128, 92, 132, true],
  ['Poczdam', 32, 137, 79, 140], ['Magdeburg', 31, 153, 28, 156], ['Gorzów', 160, 104, 157, 120], ['Wielkopolski', 160, 117], ['Zielona', 169, 151, 167, 167], ['Góra', 169, 164], ['Toruń', 281, 112, 278, 104],
  ['Brześć', 464, 154, 461, 158], ['Radom', 373, 195, 370, 198], ['Kielce', 354, 226, 351, 229], ['Opole', 257, 238, 254, 241], ['Lipsk', 57, 199, 54, 202], ['Drezno', 106, 216, 104, 219], ['Gera', 46, 225, 44, 228],
  ['Liberec', 154, 231, 151, 234], ['Praga', 132, 269, 128, 273, true], ['Pilzno', 93, 289, 90, 292], ['Ostrawa', 270, 284, 267, 287], ['Rzeszów', 404, 272, 401, 275], ['Lwów', 476, 284, 474, 287],
  ['Pińsk', 549, 154, 547, 157], ['Baran', 547, 94, 545, 97], ['Rów', 556, 240, 553, 243], ['M', 563, 46, 0, 0, true], ['ia', 0, 21], ['er', 0, 138], ['ga', 0, 188],
]
const bubbles = [
  [280, 22, 7, '#6b007b'], [257, 97, 6, '#6b007b'], [133, 79, 6, '#744ec2'], [218, 140, 7, '#744ec2'], [222, 215, 8, '#744ec2'], [309, 177, 6, '#118dff'],
  [293, 264, 8, '#e66c37'], [326, 274, 9, '#e66c37'], [421, 207, 6, '#e044a7'], [442, 97, 5, '#e044a7'],
]

const MapSvg = styled.svg`
  fill: none;
  font-family: Roboto, sans-serif;
  text {
    fill: #4c4a52;
    stroke: #e4f5e8;
    stroke-width: 2px;
    paint-order: stroke;
    font-size: 11px;
  }
  text.large { font-size: 14px; }
  text.country { fill: #8d7277; letter-spacing: 1px; font-size: 13px; }
  text.brand { font-family: "Noto Sans", sans-serif; font-size: 8px; fill: #6f7a72; stroke: none; }
  text.credit { font-family: "Noto Sans", sans-serif; font-size: 7px; fill: #252423; }
`
const PolandMap = () => (
  <MapSvg viewBox="0 0 576 297" role="img" aria-label="Łączna sprzedaż wg Miasto i Region">
    <defs>
      <filter id="woods" x="0" y="0" width="100%" height="100%" colorInterpolationFilters="sRGB">
        <feTurbulence type="fractalNoise" baseFrequency=".04 .045" numOctaves="4" seed="11" />
        <feColorMatrix values="0 0 0 0 .69  0 0 0 0 .9  0 0 0 0 .745  24 0 0 0 -13.3" />
      </filter>
    </defs>
    <rect width="576" height="297" fill="#caeed3" />
    <g transform="translate(-2 -2) scale(.33333)">
      <g fill="#b0e5be">{forest.map(d => <path key={d} d={d} />)}</g>
    </g>
    <rect width="576" height="297" filter="url(#woods)" />
    <g transform="translate(-2 -2) scale(.33333)" strokeLinejoin="round">
      <g fill="#f4f1e4">{beige.map(d => <path key={d} d={d} />)}</g>
      <g fill="#a5d3ff">{water.map(d => <path key={d} d={d} />)}</g>
      <g stroke="#a5d3ff" strokeWidth="4">{rivers.map(d => <path key={d} d={d} />)}</g>
      <g stroke="#f8bc98" strokeWidth="4">{minorRoads.map(d => <path key={d} d={d} />)}</g>
      <g stroke="#f9a470" strokeWidth="5">{majorRoads.map(d => <path key={d} d={d} />)}</g>
      <g stroke="#8a6a70" strokeWidth="4">{borders.map(d => <path key={d} d={d} />)}</g>
    </g>
    {towns.map(([name, x, y, dx, dy, large]) => (
      <g key={name}>
        {dx > 0 && <circle cx={dx} cy={dy} r="1.200" fill="#4c4a52" />}
        <text x={x} y={y} className={large ? 'large' : undefined}>{name}</text>
      </g>
    ))}
    <text className="country" x="142" y="296">CZECHY</text>
    {bubbles.map(([x, y, r, c]) => <circle key={`${x}-${y}`} cx={x} cy={y} r={r} fill={c} />)}
    <circle cx="365" cy="150" r="16" fill="#12239e" />
    <path d="M365 150V134a16 16 0 0 1 10.700 27.900z" fill="#118dff" />
    <path d="M8 284h5v5H8z" fill="#f25022" /><path d="M14 284h5v5h-5z" fill="#7fba00" />
    <path d="M8 290h5v5H8z" fill="#00a4ef" /><path d="M14 290h5v5h-5z" fill="#ffb900" />
    <text className="brand" x="22" y="293">Microsoft Azure</text>
    <text className="credit" x="447" y="292">©2026 TomTom</text>
    <text className="credit" x="499" y="292">©2026 OSM</text>
    <text className="credit" x="540" y="292">Feedback</text>
    <path d="M540 294.500h29" stroke="#3b3a39" />
  </MapSvg>
)

/* ---------- data ---------- */

const ribbonTabs = ['Plik', 'Narzędzia główne', 'Wstaw', 'Modelowanie', 'Widok', 'Optymalizowanie', 'Pomoc', 'Narzędzia zewnętrzne']

// [icon, width, line 1, line 2, has menu, disabled]
const ribbonGroups = [
  ['Dane', [
    ['database', 43, 'Pobierz', 'dane', true], ['excel', 111, 'Skoroszyt programu', 'Excel'], ['lake', 80, 'Katalog usługi', 'OneLake', true],
    ['sql', 39, 'SQL', 'Server'], ['enter', 62, 'Wprowadź', 'dane'], ['dataverse', 55, 'Dataverse', ''], ['recent', 50, 'Ostatnie', 'źródła', true],
  ]],
  ['Zapytania', [['transform', 63, 'Przekształć', 'dane', true], ['refresh', 48, 'Odśwież', '', true]]],
  ['Wstaw', [['newVisual', 81, 'Nowy element', 'wizualny'], ['textBox', 52, 'Pole', 'tekstowe'], ['moreVisuals', 73, 'Więcej', 'wizualizacji', true]]],
  ['Obliczenia', [['visualCalc', 93, 'Nowe obliczenie', 'wizualne', true], ['measure', 38, 'Nowa', 'miara'], ['quickMeasure', 41, 'Szybka', 'miara']]],
  ['Poufność', [['sensitivity', 53, 'Poufność', '', true, true]]],
  ['Udostępnij', [['publish', 48, 'Publikuj', '']]],
  ['Copilot', [['prepare', 153, 'Przygotuj dane dla sztucznej', 'inteligencji'], ['copilot', 44, 'Copilot', '']]],
]

const railIcons = [
  ['Widok raportu', <path d="M1.500 1v13.500H15M4.500 5v7h2V5zM8.500 8v4h2V8zM12.500 3v9h2V3z" stroke="#252423" strokeWidth="1.300" />],
  ['Widok tabeli', <path d="M.5 1.500h15v13H.5zM.5 4.500h15M.5 8h15M.5 11.500h15M5.500 4.500v10M10.500 4.500v10" stroke="#605e5c" />],
  ['Widok modelu', <path d="M-.5 4.500h7v7h-7zM-.5 7h7M10.500 0.500h7v6h-7zM10.500 3h7M10.500 10.500h7v6h-7zM10.500 13h7M3 4V2h7M3 12v3h7" stroke="#797775" />],
  ['DAX', <><path d="M4.500 8V.5h6l3 3v10h-2M10 .5v3.500h4M13.500 4.500l2 2v8h-3" stroke="#797775" /><path d="M1.500 9.500v5c4 0 4-5 0-5zM5.500 14.500l2-5 2 5M10 9.500l3 5M13 9.500l-3 5" transform="translate(-2 1)" stroke="#605e5c" /></>],
  ['TMDL', <><path d="M3.500 8V.5h6l4 4V8M9.500 .5v4h4" stroke="#797775" /><path d="M0 10.500h4M2 10.500v5M5.500 15.500v-5l2 3 2-3v5M11.500 10.500v5c3 0 3-5 0-5M15.500 10.500v5h3" stroke="#605e5c" /></>],
]

const years = ['2022', '2023', '2024', '2025', '2026']

const wells = [
  ['Lokalizacja', 'Miasto'], ['Szerokość geograficzna'], ['Długość geograficzna'], ['Legenda', 'Region'], ['Rozmiar', 'Łączna sprzedaż'],
  ['Etykietki'], ['Identyfikator ścieżki'], ['Kolejność punktów'],
]

const fields = [
  ['LiczbaPracownikow', 'sum'], ['Manager'], ['Miasto', 'globe', true], ['Nazwa'], ['Ocena Marzy', 'calc'], ['OtwartyOd'], ['Powierzchnia_m2', 'sum'],
  ['Region', null, true], ['Segment Sklepu', 'calc'], ['SklepID'], ['Typ'], ['Wojewodztwo'],
]
const kinds = {
  sum: <path d="M11 2V.5H1L6 6l-5 5.500h10V10" />,
  globe: <><circle cx="6" cy="6" r="5.500" /><path d="M.5 4.500h11M.5 8h11M6 .5c-4 3-4 8 0 11 4-3 4-8 0-11z" /></>,
  calc: <path d="M4 11.500H.5V.5h10V4M.5 3.500h10M3.500 .5v11M7.500 3.500v3M10 4c-3 0-2 8-4 9M5 8h5M10 9l4 5M14 9l-4 5" />,
}
const tables = [
  ['DimKalendarz'], ['DimKategorie'], ['DimPowodyZwrotow', 'calc'], ['DimPracownicy'], ['DimProdukty'], ['DimSklepy', 'used', true],
  ['FaktBudzet'], ['FaktSatysfakcja'], ['FaktSprzedaz', 'used'], ['FaktZwroty'],
]

const TableNode = ({ name, mark, initiallyOpen }) => {
  const [open, setOpen] = useState(!!initiallyOpen)
  return (
    <li>
      <TableRow onClick={() => setOpen(!open)} aria-expanded={open}>
        <Chevron dir={open ? 'down' : 'right'} size={12} color="#605e5c" />
        <Svg width="13" height="13" viewBox="0 0 13 13">
          {smallTable}
          {mark === 'calc' && <><path d="M7.500 5.500h6v8h-6z" fill="#f3f2f1" /><path d="M8 7h5M9.500 8v5M11.500 8v5M8 10.500h5" /></>}
          {mark === 'used' && <><circle cx="12" cy="12" r="5.500" fill="#117865" stroke="none" /><path d="M10 12l1.500 1.500 3-3" stroke="#fff" /></>}
        </Svg>
        <span>{name}</span>
      </TableRow>
      {open && initiallyOpen && (
        <ul>
          {fields.map(([field, kind, checked]) => (
            <li key={field}>
              <FieldRow>
                <input type="checkbox" defaultChecked={checked} />
                <span className="kind">{kind && <Svg width="12" height="12" viewBox="0 0 12 12">{kinds[kind]}</Svg>}</span>
                <span className="name">{field}</span>
                {field === 'Region' && <Svg width="12" height="4" viewBox="0 0 12 4"><path d="M0 2h2M5 2h2M10 2h2" /></Svg>}
              </FieldRow>
            </li>
          ))}
        </ul>
      )}
    </li>
  )
}

const Tile = ({ item: [title, art, on] }) => (
  <VisualButton title={title} $on={on}>
    {typeof art === 'string' ? art : <Svg width="18" height="18" viewBox="0 0 18 18">{art}</Svg>}
  </VisualButton>
)

const ring = (n, r, start) => Array.from({ length: n }, (_, i) => {
  const a = (start + i * 360 / n) * Math.PI / 180
  return [22 + r * Math.sin(a), 24 - r * Math.cos(a)]
})

export default function App() {
  return (
    <Screen>
      <GlobalStyle />
      <AppWindow>
        <TitleBar>
          <TitleButton title="Zapisz"><Svg width="15" height="15" viewBox="0 0 15 15" $color="#fff"><path d="M1.500 .5h13v14h-12l-2-2V.5zM3.500 .5v6h8v-6M4.500 14.500v-5h6v5M6.500 12v2" /></Svg></TitleButton>
          <TitleButton title="Cofnij"><Svg width="15" height="15" viewBox="0 0 15 15" $color="#fff"><path d="M1.500 0v5.500H7M2 5C6-1 15 1 13 8c-1 3-4 4-6 7" /></Svg></TitleButton>
          <TitleButton title="Ponów"><Svg width="15" height="15" viewBox="0 0 15 15" $color="#797775"><path d="M13.500 0v5.500H8M13 5C9-1 0 1 2 8c1 3 4 4 6 7" /></Svg></TitleButton>
          <FileName>
            nordvella_09_start • Czas ostatniego zapisu: 23.09.2026 o 17:54
            <Svg width="8" height="5" viewBox="0 0 8 5" $color="none"><path d="M0 0h8L4 4z" fill="#fff" /></Svg>
          </FileName>
          <TitleButton $w={44} title="Minimalizuj"><Svg width="10" height="10" viewBox="0 0 10 10" $color="#fff"><path d="M0 4.500h10" /></Svg></TitleButton>
          <TitleButton $w={44} title="Maksymalizuj"><Svg width="10" height="10" viewBox="0 0 10 10" $color="#fff"><path d="M.5 .5h9v9h-9z" /></Svg></TitleButton>
          <TitleButton $w={44} title="Zamknij"><Svg width="10" height="10" viewBox="0 0 10 10" $color="#fff"><path d="M0 0l10 10M10 0L0 10" /></Svg></TitleButton>
        </TitleBar>

        <RibbonTabs>
          {ribbonTabs.map((t, i) => <RibbonTab key={t} $first={i === 0} $active={i === 1}><span>{t}</span></RibbonTab>)}
          <RibbonTab $context><span>Format</span></RibbonTab>
          <RibbonTab $context><span>Dane/przechodzenie do szczegółów</span></RibbonTab>
          <ShareButton>
            <Svg width="16" height="15" viewBox="0 0 16 15" $color="#fff"><path d="M5 3.500H.5v11h12V11M4 10c0-4 2-6 6-6V1l5 5-5 5V8c-3 0-4 0-6 2z" /></Svg>
            Udostępnij
            <Chevron color="#fff" />
          </ShareButton>
        </RibbonTabs>

        <Ribbon>
          <RibbonGroup>
            <GroupButtons>
              <RibbonButton $w={42} disabled><BigIcon name="paste" /><span>Wklej</span></RibbonButton>
              <ClipButtons>
                <ClipButton><Svg width="17" height="16" viewBox="0 0 17 16"><path d="M5 0l6 11M12 0L6 11" strokeWidth="1.300" /><circle cx="5" cy="13" r="2" stroke="#1a86d0" /><circle cx="12" cy="13" r="2" stroke="#1a86d0" /></Svg>Wytnij</ClipButton>
                <ClipButton><Svg width="17" height="16" viewBox="0 0 17 16"><path d="M5 12.500H1.500V.5h7M6.500 3.500h6l3 3v9h-9zM12 3.500V7h3.500M8.500 10h5M8.500 12.500h5" /></Svg>Kopiuj</ClipButton>
                <ClipButton><Svg width="17" height="16" viewBox="0 0 17 16"><path d="M1 8l5-4 6 6-4 5-3-1-4-6z" {...or} /><path d="M7 4l5 6 1-3 3-5-2-2-4 3z" {...wh} /></Svg>Malarz formatów</ClipButton>
              </ClipButtons>
            </GroupButtons>
            <GroupName>Schowek</GroupName>
          </RibbonGroup>
          {ribbonGroups.map(([name, buttons]) => (
            <RibbonGroup key={name}>
              <GroupButtons>
                {buttons.map(([icon, w, a, b, menu, off]) => (
                  <RibbonButton key={icon} $w={w} disabled={off}>
                    <BigIcon name={icon} />
                    <span>{a}<br />{b}{menu && <Chevron size={7} line={2} />}</span>
                  </RibbonButton>
                ))}
              </GroupButtons>
              <GroupName>{name}</GroupName>
            </RibbonGroup>
          ))}
          <Collapse title="Zwiń wstążkę"><Chevron dir="up" line={2} /></Collapse>
        </Ribbon>

        <Workspace>
          <Rail>
            {railIcons.map(([title, art], i) => (
              <RailButton key={title} title={title} $active={i === 0}>
                <Svg width="17" height="16" viewBox="0 0 17 16">{art}</Svg>
              </RailButton>
            ))}
          </Rail>

          <Center>
            <CanvasRow>
              <Desk>
                <Report>
                  <Slicer>
                    <legend>Rok</legend>
                    {years.map(y => (
                      <SlicerItem key={y}><input type="checkbox" defaultChecked={y === '2025'} />{y}</SlicerItem>
                    ))}
                  </Slicer>
                  <Card>
                    <CardTitle>Odchylenie od budżetu</CardTitle>
                    <CardSubtitle>wg MiesiacNazwa i Kategoria</CardSubtitle>
                    <Waterfall />
                    <ChartScroll><div /></ChartScroll>
                    <Legend>
                      <LegendItem $color="#a0d99b">Zwiększ</LegendItem>
                      <LegendItem $color="#eca9b0">Zmniejsz</LegendItem>
                      <LegendItem $color="#118dff">Suma</LegendItem>
                      <LegendItem $color="#fbcba8">Inne</LegendItem>
                    </Legend>
                  </Card>
                  <Card $selected>
                    <CardTitle>Łączna sprzedaż</CardTitle>
                    <CardSubtitle>wg Miasto i Region</CardSubtitle>
                    <MapBox><PolandMap /></MapBox>
                    <Legend>
                      <LegendItem $color="#118dff">Centrum</LegendItem>
                      <LegendItem $color="#12239e">Online</LegendItem>
                      <LegendItem $color="#e66c37">Południe</LegendItem>
                      <LegendItem $color="#6b007b">Północ</LegendItem>
                      <LegendItem $color="#e044a7">Wschód</LegendItem>
                      <LegendItem $color="#744ec2">Zachód</LegendItem>
                    </Legend>
                    {['top', 'mid', 'bottom'].map(y => ['left', 'mid', 'right'].map(x => (
                      (x !== 'mid' || y !== 'mid') && <Handle key={x + y} $x={x} $y={y} />
                    )))}
                    <VisualTools>
                      <button title="Filtry"><Svg width="16" height="15" viewBox="0 0 16 15" $color="#605e5c"><path d="M.5 .5h15L10 7.500v7l-4-3v-4z" /></Svg></button>
                      <button title="Tryb koncentracji uwagi"><Svg width="14" height="14" viewBox="0 0 14 14" $color="#605e5c"><path d="M6 .5H.5v13h13V8M.5 7.500h6v6M8 .5h5.500V6M13 1L7 7" /></Svg></button>
                      <button title="Więcej opcji"><Svg width="16" height="4" viewBox="0 0 16 4" $color="#605e5c" $line={2}><path d="M1 2h2M7 2h2M13 2h2" /></Svg></button>
                    </VisualTools>
                  </Card>
                </Report>
              </Desk>
              <FilterPane>
                <Double left />
                <Svg width="12" height="12" viewBox="0 0 12 12"><path d="M11.500 .5v10L7 7.500H1l2-3h4z" strokeWidth="1.300" /></Svg>
                <FilterTitle>Filtry</FilterTitle>
              </FilterPane>
            </CanvasRow>
            <PageTabs>
              <LayoutButton $active title="Układ pulpitu"><span><Svg width="24" height="20" viewBox="0 0 24 20" $color="#605e5c" $line={2}><path d="M3 3h18v10H3zM12 13v3M8 16h8" /></Svg></span></LayoutButton>
              <LayoutButton title="Układ mobilny"><span><Svg width="24" height="20" viewBox="0 0 24 20" $color="#605e5c" $line={2}><path d="M6 1h12v18H6zM11 16h2" /></Svg></span></LayoutButton>
              <Arrows>
                <Svg width="18" height="9" viewBox="0 0 18 9" $color="none"><path d="M10 0v9L5 4.500z" fill="#c8c6c4" /></Svg>
                <Svg width="5" height="9" viewBox="0 0 5 9" $color="none"><path d="M0 0v9l5-4.500z" fill="#c8c6c4" /></Svg>
              </Arrows>
              <PageTab>Strona 1</PageTab>
              <PageTab $active>Strona 5</PageTab>
              <AddPage title="Nowa strona"><Svg width="11" height="11" viewBox="0 0 11 11" $color="#fff" $line={3}><path d="M5.500 0v11M0 5.500h11" /></Svg></AddPage>
            </PageTabs>
          </Center>

          <Pane>
            <PaneHead><h2>Wizualizacje</h2><Double /></PaneHead>
            <BuildTitle>Utwórz element wizualny</BuildTitle>
            <BuildTabs>
              <button title="Kompilacja"><Svg width="24" height="26" viewBox="0 0 24 26"><path d="M0 1.500h19" stroke="#252423" /><path d="M.5 6.500h23v7H.5zM.5 17.500h23v7H.5z" fill="#117865" stroke="#252423" strokeDasharray="2 1" /></Svg></button>
              <button title="Format"><Svg width="22" height="24" viewBox="0 0 22 24"><path d="M3.500 17H.5V6.500h6V15M6.500 13V1.500h6V11M12.500 5.500h5V8" strokeWidth="1.300" /><path d="M21 6L10 15l2 3zM10 16c-4-1-3 5-7 6 5 2 9 0 9-4z" fill="#f3f2f1" strokeWidth="1.300" /></Svg></button>
              <button title="Analiza"><Svg width="24" height="24" viewBox="0 0 24 24" $line={1.5}><circle cx="10" cy="10" r="9.500" /><path d="M17 17l6 6" strokeWidth="3" /><path d="M1 11l6-4 3 3 8-6M5 18v-5M8 19v-7M11 19v-6M14 18v-8" /></Svg></button>
            </BuildTabs>
            <Svg width="180" height="8" viewBox="0 0 180 8" $color="#797775"><path d="M0 7.500h16L24 .5l8 7h148" /></Svg>
            <VisualGrid>{gallery.map(item => <Tile key={item[0]} item={item} />)}</VisualGrid>
            <Dashes />
            <VisualGrid $pinned>{pinned.map(item => <Tile key={item[0]} item={item} />)}</VisualGrid>
            <Wells>
              <WellList>
                {wells.map(([name, value], i) => (
                  <section key={name}>
                    <WellName $first={i === 0}>{name}</WellName>
                    <WellBox $filled={!!value} $tall={i === 0}>
                      {value ? (
                        <Chip>
                          <span>{value}</span>
                          <Chevron size={13} color="#605e5c" />
                          <Svg width="8" height="8" viewBox="0 0 8 8"><path d="M0 0l8 8M8 0L0 8" /></Svg>
                        </Chip>
                      ) : 'Dodaj pola danych tutaj'}
                    </WellBox>
                  </section>
                ))}
              </WellList>
              <Thumb />
            </Wells>
          </Pane>

          <Pane>
            <PaneHead><h2>Dane</h2><Double /></PaneHead>
            <Search>
              <Svg width="16" height="16" viewBox="0 0 16 16" $color="#605e5c"><circle cx="7" cy="7" r="6" /><path d="M11.500 11.500L16 16" /></Svg>
              <input type="search" placeholder="Wyszukaj" aria-label="Wyszukaj" />
            </Search>
            <ul>
              {tables.map(([name, mark, open]) => <TableNode key={name} name={name} mark={mark} initiallyOpen={open} />)}
            </ul>
          </Pane>
        </Workspace>

        <StatusBar>
          <span>Strona 5 z 5</span>
          <ZoomArea>
            <span>-</span>
            <input type="range" min="0" max="100" defaultValue="36" aria-label="Powiększenie" />
            <span>+</span>
            <output>76%</output>
            <Svg width="16" height="12" viewBox="0 0 16 12" $color="#605e5c"><path d="M.5 .5h15v11H.5zM3 5V3h3M13 5V3h-3M3 7v2h3M13 7v2h-3" /></Svg>
          </ZoomArea>
          <UpdateLink href="#">Jest dostępna aktualizacja (kliknij, aby pobrać)</UpdateLink>
        </StatusBar>
      </AppWindow>

      <BadgeStrip>
        <Badge href="#">
          <Svg width="44" height="48" viewBox="0 0 44 48" $color="none">
            {ring(6, 20, 0).map(([x, y]) => <circle key={x + y} cx={x} cy={y} r="3.600" fill="#ee1c25" />)}
            {ring(6, 16.500, 30).map(([x, y]) => <circle key={x + y} cx={x} cy={y} r="2.400" fill="#ee1c25" />)}
            {ring(6, 12.500, 0).map(([x, y]) => <circle key={x + y} cx={x} cy={y} r="2.200" fill="#6a696b" />)}
            {ring(6, 10.500, 30).map(([x, y]) => <circle key={x + y} cx={x} cy={y} r="1.500" fill="#6a696b" />)}
          </Svg>
          <Wordmark>
            <strong><big>JS</big>YSTEMS</strong>
            <small>INSPIRACJA - WIEDZA - REALIZACJA</small>
          </Wordmark>
        </Badge>
      </BadgeStrip>
    </Screen>
  )
}
